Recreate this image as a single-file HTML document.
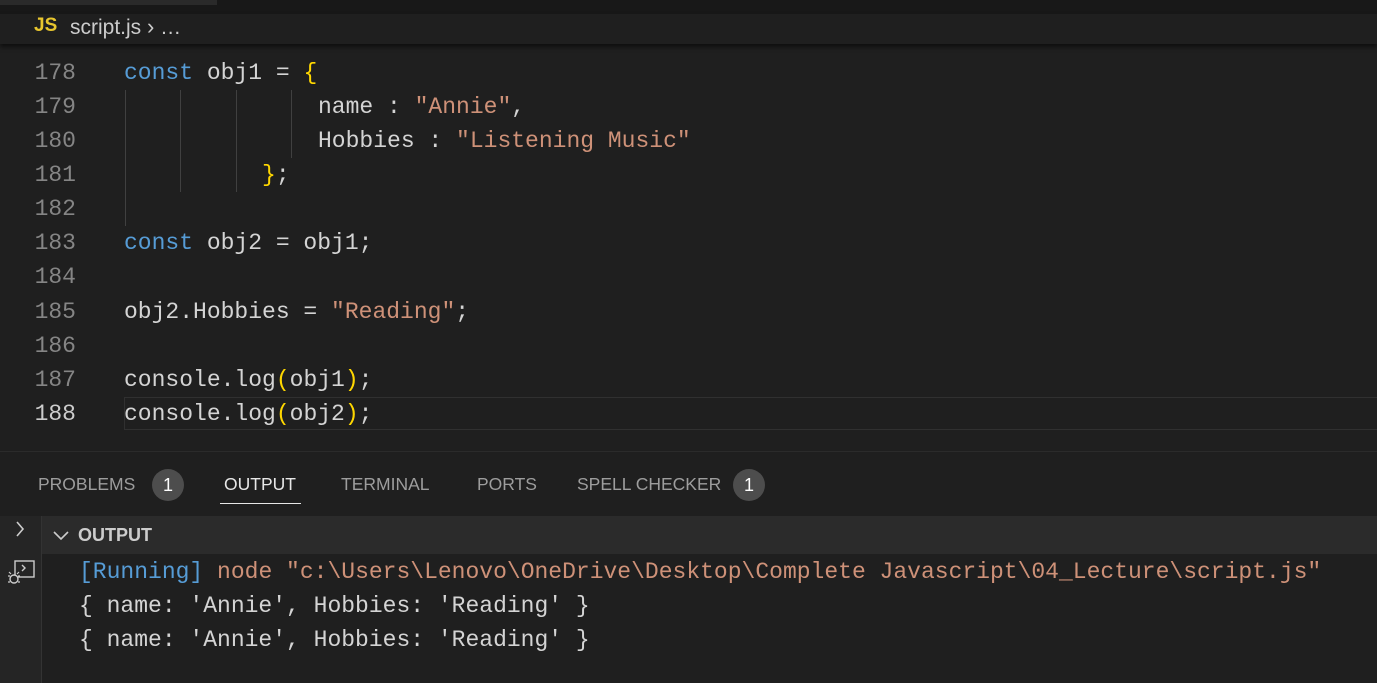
<!DOCTYPE html>
<html><head><style>
body{margin:0;width:1377px;height:682px;background:#1f1f1f;overflow:hidden;position:relative;font-family:"Liberation Sans",sans-serif}
.top{position:absolute;left:0;top:0;width:1377px;height:14px;background:#181818}
.top i{position:absolute;left:0;top:0;width:217px;height:5px;background:#2a2a2a}
.bc{position:absolute;top:14px;left:0;height:30px;width:1377px;background:#1f1f1f;box-shadow:0 3px 4px #0008;z-index:2}
.bc .js{position:absolute;left:34px;top:1px;color:#e8c62e;font-weight:bold;font-size:19px}
.bc .f{position:absolute;left:70px;top:0px;color:#cccccc;font-size:21px}
.code{position:absolute;left:0;top:56px;width:1377px;font-family:"Liberation Mono",monospace;font-size:23px}
.l{position:absolute;height:34px;line-height:34px;white-space:pre;color:#d4d4d4}
.n{position:absolute;left:0;width:76px;text-align:right;color:#858585;font-family:"Liberation Mono",monospace;font-size:23px;height:34px;line-height:34px}
.k{color:#569cd6}.s{color:#ce9178}.y{color:#ffd700}.v{color:#9cdcfe}
.g{position:absolute;width:1px;background:#404040}
.panel{position:absolute;left:0;top:451px;width:1377px;height:231px;background:#1f1f1f;border-top:1px solid #2b2b2b}
.tab{position:absolute;top:22px;font-size:17.5px;color:#9d9d9d}
.badge{position:absolute;top:17px;width:32px;height:32px;border-radius:16px;background:#4d4d4d;color:#fff;font-size:18px;text-align:center;line-height:32px}
.side{position:absolute;left:0;top:64px;width:41px;height:167px;background:#252525;border-right:1px solid #333}
.hdr{position:absolute;left:42px;top:64px;width:1335px;height:38px;background:#2b2b2b}
.out{position:absolute;left:79px;font-family:"Liberation Mono",monospace;font-size:23px;color:#d4d4d4;white-space:pre;height:34px;line-height:34px}
</style></head><body>
<div class="top"><i></i></div>
<div class="bc"><span class="js">JS</span><span class="f">script.js <span style="font-size:22px">›</span> …</span></div>
<div class="code">
<div class="g" style="left:125px;top:34px;height:136px"></div>
<div class="g" style="left:180px;top:34px;height:102px"></div>
<div class="g" style="left:236px;top:34px;height:102px"></div>
<div class="g" style="left:291px;top:34px;height:68px"></div>
<div style="position:absolute;left:124px;top:341px;width:1253px;height:31px;border:1px solid #303030;border-right:none"></div>
<div class="n" style="top:0">178</div><div class="l" style="left:124px;top:0"><span class="k">const</span> obj1 = <span class="y">{</span></div>
<div class="n" style="top:34px">179</div><div class="l" style="left:318px;top:34px">name : <span class="s">"Annie"</span>,</div>
<div class="n" style="top:68px">180</div><div class="l" style="left:318px;top:68px">Hobbies : <span class="s">"Listening Music"</span></div>
<div class="n" style="top:102px">181</div><div class="l" style="left:262px;top:102px"><span class="y">}</span>;</div>
<div class="n" style="top:136px">182</div>
<div class="n" style="top:170px">183</div><div class="l" style="left:124px;top:170px"><span class="k">const</span> obj2 = obj1;</div>
<div class="n" style="top:204px">184</div>
<div class="n" style="top:239px">185</div><div class="l" style="left:124px;top:239px">obj2.Hobbies = <span class="s">"Reading"</span>;</div>
<div class="n" style="top:273px">186</div>
<div class="n" style="top:307px">187</div><div class="l" style="left:124px;top:307px">console.log<span class="y">(</span>obj1<span class="y">)</span>;</div>
<div class="n" style="top:341px;color:#ccc">188</div><div class="l" style="left:124px;top:341px">console.log<span class="y">(</span>obj2<span class="y">)</span>;</div>
</div>
<div class="panel">
<span class="tab" style="left:38px">PROBLEMS</span><span class="badge" style="left:152px">1</span>
<span class="tab" style="left:224px;color:#e7e7e7">OUTPUT</span>
<div style="position:absolute;left:220px;top:51px;width:81px;height:1px;background:#e7e7e7"></div>
<span class="tab" style="left:341px">TERMINAL</span>
<span class="tab" style="left:477px">PORTS</span>
<span class="tab" style="left:577px">SPELL CHECKER</span><span class="badge" style="left:733px">1</span>
<div class="side">
<svg width="41" height="80" style="position:absolute;left:0;top:0"><path d="M17 6l6 7-6 7" stroke="#ccc" stroke-width="1.6" fill="none"/>
<rect x="15" y="45" width="19" height="16" stroke="#ccc" stroke-width="1.4" fill="none"/><path d="M22 49l3 3-3 3" stroke="#ccc" stroke-width="1.4" fill="none"/>
<circle cx="14" cy="63" r="4" fill="#252525" stroke="#ccc" stroke-width="1.4"/><path d="M8 60h2M8 66h2M18 60h2M18 66h2M11 58l-2-2M17 58l2-2" stroke="#ccc" stroke-width="1.2"/></svg>
</div>
<div class="hdr"><svg width="20" height="20" style="position:absolute;left:10px;top:10px"><path d="M2 6l7 7 7-7" stroke="#ccc" stroke-width="1.6" fill="none"/></svg>
<span style="position:absolute;left:36px;top:9px;color:#ccc;font-weight:bold;font-size:18px">OUTPUT</span></div>
<div class="out" style="top:103px"><span style="color:#569cd6">[Running]</span> <span class="s">node "c:\Users\Lenovo\OneDrive\Desktop\Complete Javascript\04_Lecture\script.js"</span></div>
<div class="out" style="top:137px">{ name: 'Annie', Hobbies: 'Reading' }</div>
<div class="out" style="top:171px">{ name: 'Annie', Hobbies: 'Reading' }</div>
</div>
</body></html>
